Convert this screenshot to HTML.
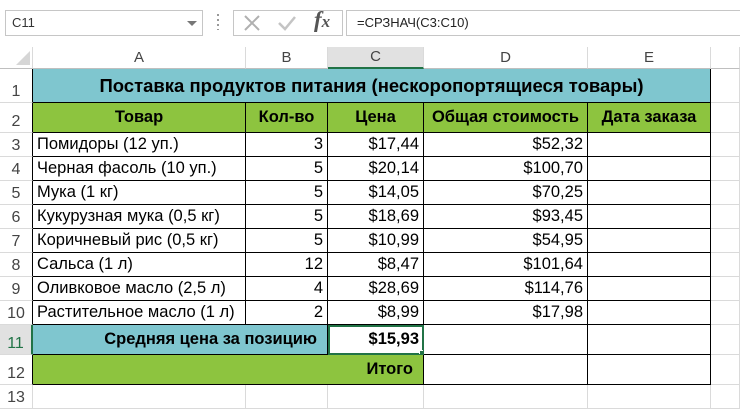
<!DOCTYPE html>
<html><head><meta charset="utf-8"><style>
body{margin:0;width:740px;height:409px;overflow:hidden;background:#fff;font-family:"Liberation Sans",Arial,sans-serif;position:relative}
.abs{position:absolute}
table{position:absolute;left:0;top:47px;border-collapse:separate;border-spacing:0;table-layout:fixed}
td{padding:0 4px;border-right:1px solid #dadada;border-bottom:1px solid #dadada;font-size:16.5px;color:#000;white-space:nowrap;overflow:hidden;box-sizing:border-box}
tr.h td{height:22px;color:#444;font-size:15px;text-align:center;vertical-align:bottom;padding-bottom:2px;border-bottom:1px solid #bfbfbf}
td.rh{color:#444;font-size:16px;text-align:center;vertical-align:bottom;padding:0 0 1px 0}
td.k{border-right-color:#000;border-bottom-color:#000}
.r{text-align:right}.c{text-align:center}.b{font-weight:bold}
.teal{background:#7fc6cf}.grn{background:#8dc43f}
</style></head><body>
<div class="abs" style="left:5px;top:10px;width:196px;height:24px;border:1px solid #c6c6c6"></div>
<div class="abs" style="left:12px;top:15px;font-size:13px;color:#333">C11</div>
<div class="abs" style="left:187px;top:21px;width:0;height:0;border-left:5px solid transparent;border-right:5px solid transparent;border-top:5px solid #777"></div>
<div class="abs" style="left:217px;top:14px;width:2px;height:16px;background:repeating-linear-gradient(#999 0 2px,transparent 2px 5px)"></div>
<div class="abs" style="left:233px;top:10px;width:108px;height:24px;border:1px solid #c6c6c6"></div>
<svg class="abs" style="left:243px;top:14px" width="18" height="18"><path d="M2 2L16 16M16 2L2 16" stroke="#b0b0b0" stroke-width="2"/></svg>
<svg class="abs" style="left:277px;top:14px" width="20" height="18"><path d="M2 9L8 15L18 3" stroke="#c4c4c4" stroke-width="2.5" fill="none"/></svg>
<div class="abs" style="left:314px;top:7px;font-family:'Liberation Serif',serif;font-style:italic;font-weight:bold;font-size:23px;color:#555">f<span style="font-size:17px">x</span></div>
<div class="abs" style="left:346px;top:10px;width:400px;height:24px;border:1px solid #c6c6c6;border-right:none"></div>
<div class="abs" style="left:357px;top:15px;font-size:13px;color:#222">=СРЗНАЧ(C3:C10)</div>
<table>
<colgroup><col style="width:33px"><col style="width:213px"><col style="width:82px"><col style="width:96px"><col style="width:164px"><col style="width:123px"><col style="width:29px"></colgroup>
<tr class="h"><td style="background:#fff;position:relative"><div class="abs" style="right:2px;bottom:3px;width:0;height:0;border-left:14px solid transparent;border-bottom:14px solid #d6d6d6"></div></td><td>A</td><td>B</td><td style="background:#e1e1e1;border-bottom:2px solid #217346">C</td><td>D</td><td>E</td><td></td></tr>
<tr style="height:34px"><td class="rh k" style="border-right-color:#000;border-bottom-color:#dadada">1</td><td colspan="5" class="teal k c b" style="font-size:18.5px">Поставка продуктов питания (нескоропортящиеся товары)</td><td></td></tr>
<tr style="height:30px"><td class="rh" style="border-right-color:#000">2</td><td class="grn k c b">Товар</td><td class="grn k c b">Кол-во</td><td class="grn k c b">Цена</td><td class="grn k c b">Общая стоимость</td><td class="grn k c b">Дата заказа</td><td></td></tr>
<tr style="height:24px"><td class="rh" style="border-right-color:#000">3</td><td class="k">Помидоры (12 уп.)</td><td class="k r">3</td><td class="k r">$17,44</td><td class="k r">$52,32</td><td class="k"></td><td></td></tr>
<tr style="height:24px"><td class="rh" style="border-right-color:#000">4</td><td class="k">Черная фасоль (10 уп.)</td><td class="k r">5</td><td class="k r">$20,14</td><td class="k r">$100,70</td><td class="k"></td><td></td></tr>
<tr style="height:24px"><td class="rh" style="border-right-color:#000">5</td><td class="k">Мука (1 кг)</td><td class="k r">5</td><td class="k r">$14,05</td><td class="k r">$70,25</td><td class="k"></td><td></td></tr>
<tr style="height:24px"><td class="rh" style="border-right-color:#000">6</td><td class="k">Кукурузная мука (0,5 кг)</td><td class="k r">5</td><td class="k r">$18,69</td><td class="k r">$93,45</td><td class="k"></td><td></td></tr>
<tr style="height:24px"><td class="rh" style="border-right-color:#000">7</td><td class="k">Коричневый рис (0,5 кг)</td><td class="k r">5</td><td class="k r">$10,99</td><td class="k r">$54,95</td><td class="k"></td><td></td></tr>
<tr style="height:24px"><td class="rh" style="border-right-color:#000">8</td><td class="k">Сальса (1 л)</td><td class="k r">12</td><td class="k r">$8,47</td><td class="k r">$101,64</td><td class="k"></td><td></td></tr>
<tr style="height:24px"><td class="rh" style="border-right-color:#000">9</td><td class="k">Оливковое масло (2,5 л)</td><td class="k r">4</td><td class="k r">$28,69</td><td class="k r">$114,76</td><td class="k"></td><td></td></tr>
<tr style="height:24px"><td class="rh" style="border-right-color:#000">10</td><td class="k">Растительное масло (1 л)</td><td class="k r">2</td><td class="k r">$8,99</td><td class="k r">$17,98</td><td class="k"></td><td></td></tr>
<tr style="height:30px"><td class="rh" style="background:#e1e1e1;color:#217346;border-right:2px solid #217346">11</td><td colspan="2" class="teal k r b" style="padding-right:10px">Средняя цена за позицию</td><td class="k r b" style="position:relative;outline:2px solid #217346;outline-offset:-2px">$15,93<div class="abs" style="right:-3px;bottom:-3px;width:5px;height:5px;background:#217346;border:1px solid #fff"></div></td><td class="k"></td><td class="k"></td><td></td></tr>
<tr style="height:30px"><td class="rh" style="border-right-color:#000">12</td><td colspan="3" class="grn k r b" style="padding-right:10px">Итого</td><td class="k"></td><td class="k"></td><td></td></tr>
<tr style="height:24px"><td class="rh">13</td><td></td><td></td><td></td><td></td><td></td><td></td></tr>
</table>
</body></html>
